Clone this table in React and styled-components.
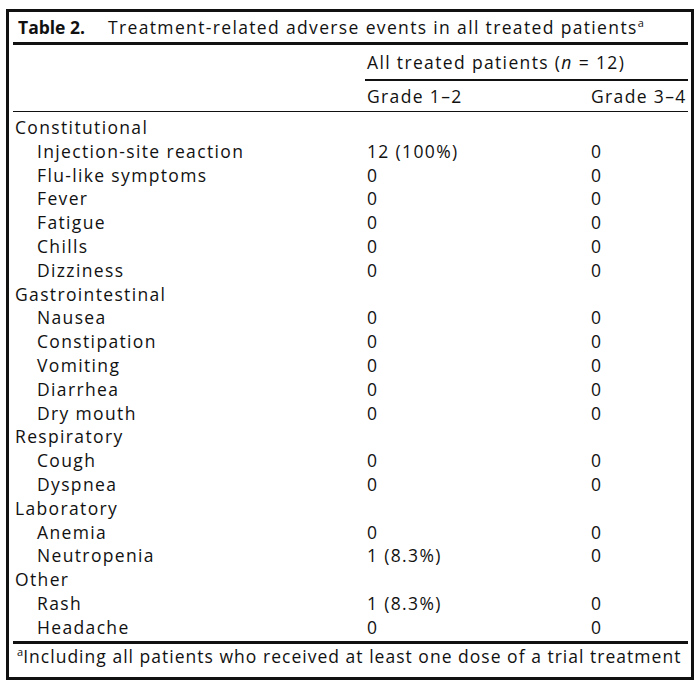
import styled, { createGlobalStyle } from "styled-components";

const GlobalStyle = createGlobalStyle`
  body {
    margin: 0;
    background: #ffffff;
    font-family: "Open Sans", "Noto Sans", sans-serif;
    color: #111;
  }
`;

const Frame = styled.div`
  box-sizing: border-box;
  width: 688px;
  height: 671px;
  margin: 9px 0 0 6px;
  border: 3px solid #111;
  padding: 0 3px 0 4px;
  font-size: 17.5px;
  font-weight: 500;
  letter-spacing: 1.35px;
`;

const Caption = styled.div`
  height: 30px;
  line-height: 30px;
  padding-left: 5px;
  border-bottom: 3px solid #111;
  white-space: nowrap;
`;

const CaptionLabel = styled.b`
  font-weight: 700;
  letter-spacing: 0;
  margin-right: 23px;
`;

const Sup = styled.sup`
  font-size: 11px;
  line-height: 0;
  vertical-align: 7px;
  letter-spacing: 0;
`;

const Row = styled.div`
  display: grid;
  grid-template-columns: 352px 224px 1fr;
  align-items: center;
  height: ${(p) => p.$h || "23.81px"};
  border-bottom: ${(p) => p.$rule || "none"};
  white-space: nowrap;
`;

const SpanHead = styled.div`
  grid-column: 2 / 4;
  height: 34px;
  line-height: 34px;
  padding-left: 2px;
  border-bottom: 2.5px solid #111;
`;

const Cell = styled.div`
  padding-left: ${(p) => (p.$indent ? "24px" : "2px")};
`;

const Body = styled.div`
  padding: 3px 0 2px;
  border-bottom: 3px solid #111;
`;

const Note = styled.div`
  padding: 1px 0 0 4px;
  height: 22px;
  line-height: 22px;
  white-space: nowrap;
  letter-spacing: 1.02px;
`;

const sections = [
  ["Constitutional", [
    ["Injection-site reaction", "12 (100%)", "0"],
    ["Flu-like symptoms", "0", "0"],
    ["Fever", "0", "0"],
    ["Fatigue", "0", "0"],
    ["Chills", "0", "0"],
    ["Dizziness", "0", "0"],
  ]],
  ["Gastrointestinal", [
    ["Nausea", "0", "0"],
    ["Constipation", "0", "0"],
    ["Vomiting", "0", "0"],
    ["Diarrhea", "0", "0"],
    ["Dry mouth", "0", "0"],
  ]],
  ["Respiratory", [
    ["Cough", "0", "0"],
    ["Dyspnea", "0", "0"],
  ]],
  ["Laboratory", [
    ["Anemia", "0", "0"],
    ["Neutropenia", "1 (8.3%)", "0"],
  ]],
  ["Other", [
    ["Rash", "1 (8.3%)", "0"],
    ["Headache", "0", "0"],
  ]],
];

export default function App() {
  return (
    <>
      <GlobalStyle />
      <Frame>
        <Caption>
          <CaptionLabel>Table 2.</CaptionLabel>
          Treatment-related adverse events in all treated patients<Sup>a</Sup>
        </Caption>

        <Row $h="auto">
          <div />
          <SpanHead>
            All treated patients (<i>n</i> = 12)
          </SpanHead>
        </Row>
        <Row $h="30px" $rule="1.5px solid #111">
          <div />
          <Cell>Grade 1–2</Cell>
          <Cell>Grade 3–4</Cell>
        </Row>

        <Body>
          {sections.map(([title, items]) => (
            <div key={title}>
              <Row>
                <Cell>{title}</Cell>
              </Row>
              {items.map(([label, low, high]) => (
                <Row key={label}>
                  <Cell $indent>{label}</Cell>
                  <Cell>{low}</Cell>
                  <Cell>{high}</Cell>
                </Row>
              ))}
            </div>
          ))}
        </Body>

        <Note>
          <Sup>a</Sup>Including all patients who received at least one dose of a trial treatment
        </Note>
      </Frame>
    </>
  );
}
